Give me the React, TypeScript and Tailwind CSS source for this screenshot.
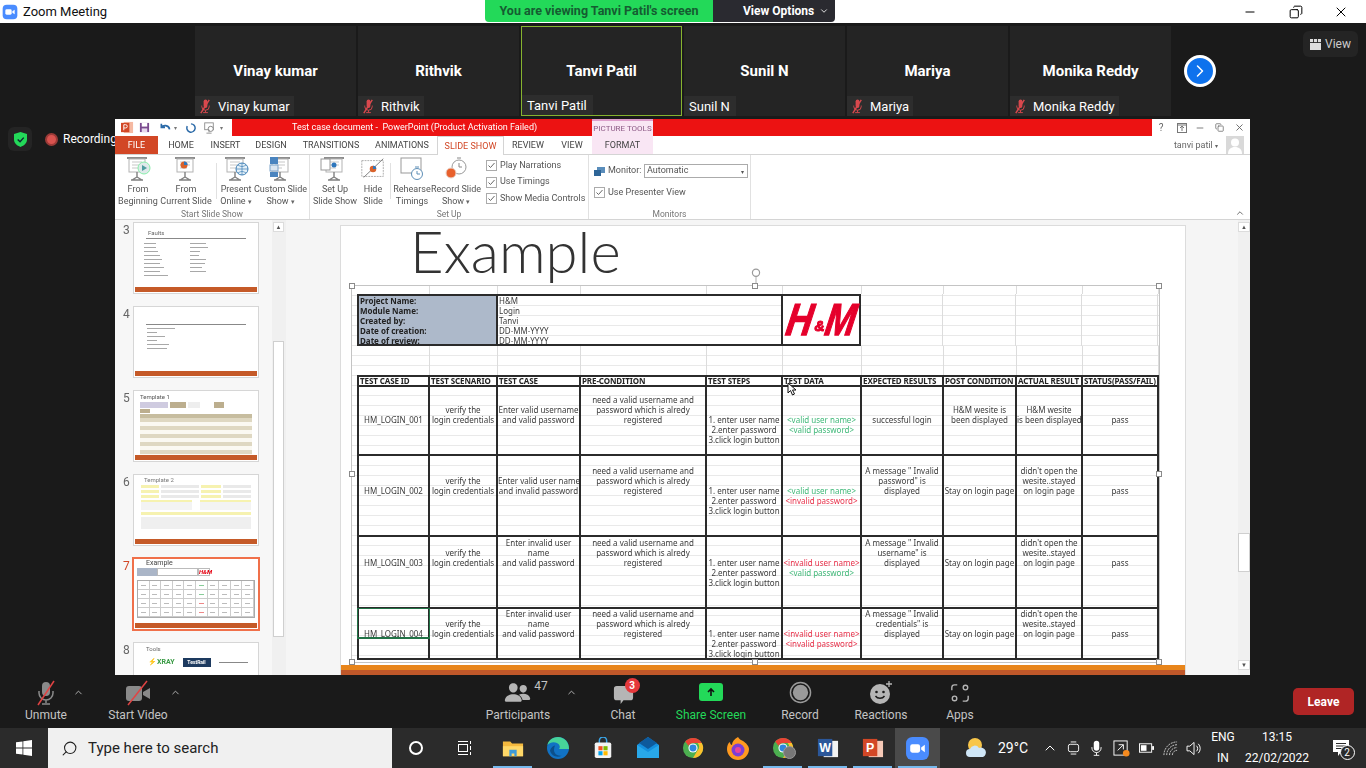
import type { ReactNode } from "react";
import { ChevronDown, ChevronUp, ChevronRight, Search, Minus, X, Copy } from "lucide-react";
import { IoPeople } from "react-icons/io5";

// ---- small shared drawings ----
const MutedMic = () => (
  <svg viewBox="0 0 16 16" className="w-[15px] h-[15px] shrink-0">
    <path d="M6 2.5a2 2 0 0 1 4 0v5a2 2 0 0 1-4 0z" fill="#d9484d" />
    <path d="M4 7v1a4 4 0 0 0 8 0V7M8 12v2M5.5 14.5h5" stroke="#d9484d" fill="none" />
    <path d="M12 1 3 15" stroke="#d9484d" strokeWidth="1.6" />
  </svg>
);

const Tile = ({ name, muted, active }: { name: string; muted?: boolean; active?: boolean }) => (
  <div className={`relative w-[161px] h-[90px] bg-[#242424] flex items-center justify-center ${active ? "border border-[#86b32f]" : ""}`}>
    <span className="text-white text-[15px] font-bold">{name}</span>
    <div className="absolute left-0 bottom-0 h-[20px] bg-[#2d2d2d] flex items-center gap-[5px] pl-[3px] pr-[4px] text-white text-[13px] leading-none">
      {muted && <MutedMic />}
      <span className={muted ? "" : "px-[2px]"}>{name}</span>
    </div>
  </div>
);

const ZoomCam = ({ className }: { className: string }) => (
  <svg viewBox="0 0 24 24" className={className}>
    <rect x="1" y="1" width="22" height="22" rx="6" fill="#4a8cff" />
    <rect x="5" y="8" width="9.5" height="8" rx="2" fill="#fff" />
    <path d="m15.5 11 3.5-2.5v7L15.5 13z" fill="#fff" />
  </svg>
);

// ---- powerpoint ribbon ----
const Board = ({ children }: { children?: ReactNode }) => (
  <svg viewBox="0 0 30 26" className="w-[30px] h-[26px]">
    <rect x="4" y="1" width="20" height="2" fill="#8d8d8d" />
    <rect x="6" y="3" width="16" height="13" fill="#fff" stroke="#b3b3b3" />
    <path d="M9 6h10M9 9h10M9 12h7" stroke="#c7c7c7" />
    <path d="M14 16v5M8 24h12M14 21l-5 3M14 21l5 3" stroke="#808080" strokeWidth="1.4" fill="none" />
    {children}
  </svg>
);

const RibbonBtn = ({ w, lines, icon }: { w: string; lines: ReactNode[]; icon: ReactNode }) => (
  <div className={`${w} flex flex-col items-center shrink-0`}>
    <div className="h-[28px] pt-[1px]">{icon}</div>
    {lines.map((l, i) => (
      <div key={i} className="h-[12px] leading-[12px] whitespace-nowrap">{l}</div>
    ))}
  </div>
);

const Caret = () => <span className="text-[7px] text-[#666] ml-[2px]">▾</span>;

const Check = ({ label, className = "" }: { label: string; className?: string }) => (
  <div className={`flex items-center gap-[3px] h-[11px] whitespace-nowrap ${className}`}>
    <svg viewBox="0 0 11 11" className="w-[11px] h-[11px] shrink-0">
      <rect x=".5" y=".5" width="10" height="10" fill="#fff" stroke="#ababab" />
      <path d="m2.5 5.5 2 2 4-4.5" stroke="#666" fill="none" />
    </svg>
    <span>{label}</span>
  </div>
);

const tabs = [
  ["HOME", "w-[46px]"],
  ["INSERT", "w-[43px]"],
  ["DESIGN", "w-[48px]"],
  ["TRANSITIONS", "w-[72px]"],
  ["ANIMATIONS", "w-[70px]"],
];

const Ribbon = () => (
  <>
    {/* title row */}
    <div className="h-[17px] flex bg-white shrink-0">
      <div className="w-[117px] flex items-center pl-[6px] gap-[5px]">
        <svg viewBox="0 0 14 14" className="w-[13px] h-[13px]">
          <rect x="3" y="1" width="10" height="12" fill="#f5b9a2" />
          <rect x="0" y="2" width="9" height="10" fill="#d24726" />
          <path d="M3 10V4h2a1.5 1.5 0 0 1 0 3.500H3" stroke="#fff" fill="none" />
        </svg>
        <svg viewBox="0 0 12 12" className="w-[11px] h-[11px]">
          <rect x="1" y="1" width="10" height="10" fill="#7a4a8f" />
          <rect x="3" y="1" width="6" height="4" fill="#fff" />
          <rect x="3" y="7" width="6" height="4" fill="#e6d8ec" />
        </svg>
        <svg viewBox="0 0 14 12" className="w-[14px] h-[11px] ml-[3px]">
          <path d="M3 2v4h4M3 6c2-3 8-3 9 2" stroke="#2b6aa8" strokeWidth="1.8" fill="none" />
        </svg>
        <span className="text-[6px] text-[#777] -ml-[3px]">▾</span>
        <svg viewBox="0 0 12 12" className="w-[11px] h-[12px] ml-[3px]">
          <path d="M6.500 1.500A4.500 4.500 0 1 1 2.500 4" stroke="#2b6aa8" strokeWidth="1.6" fill="none" />
        </svg>
        <svg viewBox="0 0 14 14" className="w-[12px] h-[12px] ml-[2px]">
          <rect x="2" y="1" width="10" height="8" fill="#fff" stroke="#888" />
          <circle cx="9" cy="8" r="3" fill="#fff" stroke="#777" />
          <path d="M7 9v3M4 13h6" stroke="#888" />
        </svg>
        <span className="text-[6px] text-[#777]">▾</span>
      </div>
      <div className="w-[360px] bg-[#ec1212] text-white text-[9px] leading-[17px] pl-[60px] whitespace-pre">
        Test case document -  PowerPoint (Product Activation Failed)
      </div>
      <div className="w-[61px] bg-[#f9e6f4] border-t-2 border-[#dd9ecb] text-[#8d5a86] text-[8px] leading-[15px] text-center">PICTURE TOOLS</div>
      <div className="w-[499px] bg-[#ec1212]" />
      <div className="flex-1 flex items-center text-[#666] text-[10px]">
        <span className="w-[18px] text-center">?</span>
        <svg viewBox="0 0 10 10" className="w-[10px] h-[10px] ml-[7px]"><rect x=".5" y=".5" width="9" height="9" fill="none" stroke="#777" /><path d="M5 8V3M3 5l2-2 2 2M1 2h8" stroke="#777" fill="none" /></svg>
        <Minus size={10} className="ml-[8px]" />
        <Copy size={9} className="ml-[10px]" />
        <X size={11} className="ml-[10px]" />
      </div>
    </div>
    {/* tabs */}
    <div className="h-[19px] flex items-stretch bg-white border-b border-[#d4d4d4] text-[#444] text-[9px] shrink-0">
      <div className="w-[43px] bg-[#d24726] text-white flex items-center justify-center pt-[1px]">FILE</div>
      {tabs.map(([t, w]) => (
        <div key={t} className={`${w} flex items-center justify-center pt-[1px]`}>{t}</div>
      ))}
      <div className="w-[67px] h-[19px] border border-b-0 border-[#d4d4d4] bg-white text-[#d24726] flex items-center justify-center pt-[1px]">SLIDE SHOW</div>
      <div className="w-[48px] flex items-center justify-center pt-[1px]">REVIEW</div>
      <div className="w-[40px] flex items-center justify-center pt-[1px]">VIEW</div>
      <div className="w-[61px] bg-[#f9e6f4] flex items-center justify-center pt-[1px]">FORMAT</div>
      <div className="flex-1 flex items-center justify-end pr-[6px] gap-[8px] text-[#666]">
        <span className="pt-[1px]">tanvi patil <span className="text-[6px]">▾</span></span>
        <svg viewBox="0 0 18 18" className="w-[18px] h-[18px]">
          <rect width="18" height="18" fill="#d9d9d9" />
          <circle cx="9" cy="6.500" r="4" fill="#fff" />
          <path d="M2 18c0-5 3-7 7-7s7 2 7 7z" fill="#fff" />
        </svg>
      </div>
    </div>
    {/* ribbon body */}
    <div className="h-[65px] flex bg-white border-b border-[#d4d4d4] text-[#555] text-[9px] shrink-0">
      <div className="w-[195px] border-r border-[#e1e1e1] flex flex-col">
        <div className="flex-1 flex">
          <RibbonBtn w="w-[46px]" lines={["From", "Beginning"]} icon={<Board><circle cx="21" cy="12" r="6" fill="#dfe9ea" stroke="#8ea" /><path d="m19 9 5 3-5 3z" fill="#4f9ca0" /></Board>} />
          <RibbonBtn w="w-[50px]" lines={["From", "Current Slide"]} icon={<Board><circle cx="13" cy="9" r="3.500" fill="#d9622b" /><path d="M13 9V5.500a3.500 3.500 0 0 1 3.500 3.500z" fill="#2f77bd" /></Board>} />
          <div className="w-px h-[36px] mt-[8px] ml-[5px] mr-[2px] bg-[#e1e1e1]" />
          <RibbonBtn w="w-[34px]" lines={["Present", <>Online<Caret /></>]} icon={<Board><circle cx="21" cy="13" r="6" fill="#e4f0f8" stroke="#3f7fb5" /><path d="M15 13h12M21 7v12M17 9c3 2 5 2 8 0M17 17c3-2 5-2 8 0" stroke="#3f7fb5" fill="none" strokeWidth=".7" /></Board>} />
          <div className="w-[2px]" />
          <RibbonBtn w="w-[51px]" lines={["Custom Slide", <>Show<Caret /></>]} icon={<Board><rect x="4" y="1" width="8" height="7" fill="#4a84bf" /><rect x="4" y="9" width="8" height="6" fill="#dbe6f1" stroke="#7da3c9" /><rect x="4" y="16" width="8" height="5" fill="#4a84bf" /></Board>} />
        </div>
        <div className="h-[10px] leading-[10px] text-center text-[#777] text-[8.500px]">Start Slide Show</div>
      </div>
      <div className="w-[279px] border-r border-[#e1e1e1] flex flex-col">
        <div className="flex-1 flex">
          <div className="w-[2px]" />
          <RibbonBtn w="w-[46px]" lines={["Set Up", "Slide Show"]} icon={<Board><rect x="1" y="3" width="9" height="11" fill="#fff" stroke="#999" /><circle cx="14" cy="9" r="2.500" fill="#2f77bd" /></Board>} />
          <RibbonBtn w="w-[30px]" lines={["Hide", "Slide"]} icon={<svg viewBox="0 0 30 26" className="w-[28px] h-[26px]"><rect x="3" y="4" width="23" height="17" fill="#fff" stroke="#aaa" strokeDasharray="2 1" /><path d="M5 22 26 2" stroke="#777" /><circle cx="15" cy="13" r="3.500" fill="#d9622b" /><path d="M15 13v-3.500a3.500 3.500 0 0 1 3.500 3.500z" fill="#2f77bd" /></svg>} />
          <div className="w-px h-[36px] mt-[8px] ml-[2px] mr-[1px] bg-[#e1e1e1]" />
          <RibbonBtn w="w-[40px]" lines={["Rehearse", "Timings"]} icon={<svg viewBox="0 0 30 26" className="w-[30px] h-[26px]"><rect x="4" y="2" width="20" height="15" fill="#fff" stroke="#999" /><circle cx="20" cy="18" r="5.500" fill="#fff" stroke="#5e8fb7" /><path d="M20 15v3h3M18 11h4" stroke="#5e8fb7" fill="none" /></svg>} />
          <RibbonBtn w="w-[48px]" lines={["Record Slide", <>Show<Caret /></>]} icon={<svg viewBox="0 0 30 26" className="w-[30px] h-[26px]"><circle cx="18" cy="11" r="7" fill="#fff" stroke="#999" /><path d="M18 7v4h3M16 2h4" stroke="#888" fill="none" /><circle cx="10" cy="17" r="5" fill="#e8602c" stroke="#e9d5cc" /></svg>} />
          <div className="pl-[6px] pt-[5px] flex flex-col gap-[5.500px]">
            <Check label="Play Narrations" />
            <Check label="Use Timings" />
            <Check label="Show Media Controls" />
          </div>
        </div>
        <div className="h-[10px] leading-[10px] text-center text-[#777] text-[8.500px]">Set Up</div>
      </div>
      <div className="w-[162px] border-r border-[#e1e1e1] flex flex-col pl-[5px]">
        <div className="flex-1">
          <div className="flex items-center gap-[3px] mt-[9px] h-[14px]">
            <svg viewBox="0 0 11 11" className="w-[11px] h-[11px]"><rect x="3" y="1" width="8" height="6" fill="#5a8dbb" /><rect y="4" width="7" height="6" fill="#2e6597" /></svg>
            <span className="w-[32px]">Monitor:</span>
            <div className="ml-[1px] w-[104px] h-[14px] border border-[#ababab] flex items-center justify-between pl-[2px] pr-[3px]">
              <span>Automatic</span>
              <span className="text-[6px]">▾</span>
            </div>
          </div>
          <Check label="Use Presenter View" className="mt-[9px]" />
        </div>
        <div className="h-[10px] leading-[10px] text-center text-[#777] text-[8.500px] pr-[5px]">Monitors</div>
      </div>
      <div className="flex-1 relative">
        <ChevronUp size={10} className="absolute right-[5px] bottom-[1px] text-[#555]" />
      </div>
    </div>
  </>
);

// ---- slide thumbnails ----
const BulletLines = ({ widths }: { widths: string[] }) => (
  <div className="flex flex-col gap-[3px]">
    {widths.map((w, i) => (
      <div key={i} className={`${w} h-px bg-[#a8a8a8]`} />
    ))}
  </div>
);

const Thumb = ({ no, active, children }: { no: number; active?: boolean; children: ReactNode }) => (
  <div className="flex shrink-0 pl-[8px]">
    <div className={`w-[11px] text-[12px] leading-[14px] ${active ? "text-[#d24726]" : "text-[#666]"}`}>{no}</div>
    <div className={`w-[124px] h-[70px] shrink-0 bg-white flex flex-col relative ${active ? "outline-2 outline-[#f0704a]" : "outline outline-[#d6d6d6]"}`}>
      <div className="flex-1 overflow-hidden blur-[0.5px]">{children}</div>
      <div className="h-[5px] mx-[1px] mb-[1px] bg-[#c55a28] shrink-0" />
    </div>
  </div>
);

const TanRows = () => (
  <div className="mx-[6px] flex flex-col">
    {[0, 1, 2, 3, 4, 5, 6, 7, 8, 9].map((i) => (
      <div key={i} className={`h-[4px] ${i % 2 ? "bg-[#fbf9f2]" : "bg-[#dfd8c2]"}`} />
    ))}
  </div>
);

const Thumbs = () => (
  <div className="w-[157px] bg-[#f7f7f7] flex flex-col gap-[14px] pt-[3px] overflow-hidden shrink-0">
    <Thumb no={3}>
      <div className="pl-[14px] pt-[6px] text-[6px] leading-[8px] text-[#666]">Faults</div>
      <div className="h-px mx-[12px] mt-[1px] bg-[#888]" />
      <div className="flex gap-[22px] pl-[10px] pt-[4px]">
        <BulletLines widths={["w-[12px]", "w-[12px]", "w-[14px]", "w-[16px]", "w-[18px]", "w-[16px]", "w-[20px]", "w-[16px]", "w-[24px]"]} />
        <BulletLines widths={["w-[16px]", "w-[18px]", "w-[10px]", "w-[9px]", "w-[16px]", "w-[15px]", "w-[12px]", "w-[16px]"]} />
      </div>
    </Thumb>
    <Thumb no={4}>
      <div className="h-px mx-[12px] mt-[17px] bg-[#888]" />
      <div className="pl-[13px] pt-[3px]">
        <BulletLines widths={["w-[28px]", "w-[10px]", "w-[18px]", "w-[10px]", "w-[22px]", "w-[20px]"]} />
      </div>
    </Thumb>
    <Thumb no={5}>
      <div className="pl-[6px] pt-[2px] text-[6px] leading-[8px] text-[#555]">Template 1</div>
      <div className="flex gap-[2px] mx-[6px] mt-[1px] h-[6px]">
        <div className="w-[28px] bg-[#cfcbe0]" />
        <div className="w-[16px] bg-[#bcae8e]" />
        <div className="w-[12px] bg-[#eee]" />
        <div className="w-[10px]" />
        <div className="w-[10px] bg-[#bcae8e]" />
      </div>
      <div className="h-[4px] w-[10px] bg-[#bcae8e] mx-[6px] mt-[1px]" />
      <div className="h-[4px] mx-[6px] mt-[1px] bg-[#c7bd9f]" />
      <TanRows />
    </Thumb>
    <Thumb no={6}>
      <div className="pl-[10px] pt-[1px] text-[6px] leading-[8px] text-[#777]">Template 2</div>
      <div className="mx-[7px] mt-[1px] flex flex-col gap-[2px]">
        {[0, 1, 2].map((i) => (
          <div key={i} className="flex gap-[2px] h-[3px]">
            <div className="w-[18px] bg-[#f6f2b0]" />
            <div className="flex-1 bg-[#e9e9e9]" />
            <div className="w-[20px] bg-[#f6f2b0]" />
            <div className="w-[28px] bg-[#e9e9e9]" />
          </div>
        ))}
        <div className="flex gap-[8px] h-[10px]">
          <div className="flex-1 bg-[#f3f3f3] border-t-2 border-[#f6f2b0]" />
          <div className="flex-1 bg-[#f3f3f3] border-t-2 border-[#f6f2b0]" />
        </div>
        <div className="h-[3px] bg-[#f6f2b0]" />
        <div className="h-[12px] bg-[#efefef]" />
      </div>
    </Thumb>
    <Thumb no={7} active>
      <div className="pl-[12px] text-[7px] leading-[9px] text-[#444]">Example</div>
      <div className="flex mx-[3px] h-[8px]">
        <div className="w-[20px] bg-[#aab5c7]" />
        <div className="w-[41px] border border-[#bbb]" />
        <div className="w-[12px] border border-[#bbb] text-[6px] leading-[6px] font-bold italic text-[#e50010]">H&amp;M</div>
      </div>
      <div className="mx-[3px] mt-[4px] border border-[#aaa] grid grid-cols-10">
        {Array.from({ length: 40 }, (_, i) => (
          <div key={i} className="h-[9px] border-r border-b border-[#ccc] flex items-center justify-center">
            <div className={`w-[5px] h-px ${i % 10 === 5 ? (i > 20 ? "bg-[#e88]" : "bg-[#8c9]") : "bg-[#bbb]"}`} />
          </div>
        ))}
      </div>
    </Thumb>
    <Thumb no={8}>
      <div className="pl-[12px] pt-[2px] text-[6px] leading-[8px] text-[#666]">Tools</div>
      <div className="flex items-center pl-[14px] pt-[4px] gap-[8px] text-[7px] font-bold text-[#333]">
        <span className="text-[#3a9b45]">⚡XRAY</span>
        <div className="w-[28px] h-[9px] bg-[#1d3a5f] text-white text-[5px] leading-[9px] text-center">TestRail</div>
        <div className="flex-1 h-px bg-[#888] mr-[10px]" />
      </div>
    </Thumb>
  </div>
);

// ---- table on the slide ----
type Cell = [number, string[]];
type Row = { height: string; anchor: number; cells: Cell[] };

const steps: Cell = [0, ["1. enter user name", "2.enter password", "3.click login button"]];
const verify: Cell = [1, ["verify the", "login credentials"]];
const pre: Cell = [2, ["need a valid username and", "password which is alredy", "registered"]];
const stay: Cell = [0, ["Stay on login page"]];
const didnt: Cell = [2, ["didn't open the", "wesite..stayed", "on login page"]];
const pass: Cell = [0, ["pass"]];

const rows: Row[] = [
  {
    height: "h-[69px]",
    anchor: 28,
    cells: [[0, ["HM_LOGIN_001"]], verify, [1, ["Enter valid username", "and valid password"]], pre, steps, [0, ["<valid user name>", "<valid password>"]], [0, ["successful login"]], [1, ["H&M wesite is", "been displayed"]], [1, ["H&M wesite", "is been displayed"]], pass],
  },
  {
    height: "h-[81px]",
    anchor: 30,
    cells: [[0, ["HM_LOGIN_002"]], verify, [1, ["Enter valid user name", "and invalid password"]], pre, steps, [0, ["<valid user name>", "<invalid password>"]], [2, ['A message " Invalid', 'password" is', "displayed"]], stay, didnt, pass],
  },
  {
    height: "h-[72px]",
    anchor: 21,
    cells: [[0, ["HM_LOGIN_003"]], verify, [2, ["Enter invalid user", "name", "and valid password"]], pre, steps, [0, ["<invalid user name>", "<valid password>"]], [2, ['A message " Invalid', 'username" is', "displayed"]], stay, didnt, pass],
  },
  {
    height: "h-[51px]",
    anchor: 20,
    cells: [[0, ["HM_LOGIN_004"]], verify, [2, ["Enter invalid user", "name", "and valid password"]], pre, steps, [0, ["<invalid user name>", "<invalid password>"]], [2, ['A message " Invalid', 'credentials" is', "displayed"]], stay, didnt, pass],
  },
];

const cols = "grid grid-cols-[71px_68px_83px_126px_76px_79px_82px_73px_66px_76px]";
const headers = ["TEST CASE ID", "TEST SCENARIO", "TEST CASE", "PRE-CONDITION", "TEST STEPS", "TEST DATA", "EXPECTED RESULTS", "POST CONDITION", "ACTUAL RESULT", "STATUS(PASS/FAIL)"];

const BlankCols = ({ height }: { height: string }) => (
  <div className={`${cols} ${height} ml-[7px]`}>
    {headers.map((h) => (
      <div key={h} className="border-r border-[#dcdcdc]" />
    ))}
  </div>
);

const Handle = ({ className }: { className: string }) => (
  <div className={`absolute w-[6px] h-[6px] bg-white border border-[#8a8a8a] ${className}`} />
);

const TableImage = () => (
  <div className="relative ml-[11px] w-[807px] h-[376px] outline outline-[#c4c4c4] bg-white bg-[repeating-linear-gradient(to_bottom,transparent_0,transparent_9px,#e9e9e9_9px,#e9e9e9_10px)] text-[8px] leading-[10px] text-[#3a3a3a] font-['Noto_Sans',sans-serif]">
    <BlankCols height="h-[8px]" />
    {/* project info + logo */}
    <div className="flex h-[52px]">
      <div className="ml-[5px] w-[504px] h-[52px] border-2 border-[#2b2b2b] flex bg-white">
        <div className="w-[139px] bg-[#adb9ca] border-r-2 border-[#2b2b2b] pl-[1px] font-bold text-[#222]">
          {["Project Name:", "Module Name:", "Created by:", "Date of creation:", "Date of review:"].map((t) => (
            <div key={t} className="h-[10px]">{t}</div>
          ))}
        </div>
        <div className="w-[285px] border-r-2 border-[#2b2b2b] pl-[1px] bg-[repeating-linear-gradient(to_bottom,transparent_0,transparent_9px,#e9e9e9_9px,#e9e9e9_10px)]">
          {["H&M", "Login", "Tanvi", "DD-MM-YYYY", "DD-MM-YYYY"].map((t, i) => (
            <div key={i} className="h-[10px]">{t}</div>
          ))}
        </div>
        <div className="flex-1 flex items-center justify-center text-[#e5002b] leading-[40px] font-bold italic font-['Liberation_Sans',sans-serif] [-webkit-text-stroke:1px_#e5002b]">
          <span className="text-[36px] -skew-x-12 scale-y-125">H</span>
          <span className="text-[14px] mx-[1px] mt-[12px]">&amp;</span>
          <span className="text-[36px] -skew-x-12 scale-y-125 tracking-[-1px]">M</span>
        </div>
      </div>
      <div className="flex">
        {["w-[82px]", "w-[73px]", "w-[66px]", "w-[76px]"].map((w) => (
          <div key={w} className={`${w} border-r border-[#dcdcdc]`} />
        ))}
      </div>
    </div>
    <BlankCols height="h-[29px]" />
    {/* test cases */}
    <div className="ml-[5px] w-[802px] border-t-2 border-l-2 border-[#2b2b2b]">
      <div className={`${cols} h-[10px]`}>
        {headers.map((h) => (
          <div key={h} className="border-r-2 border-b-2 border-[#2b2b2b] pl-[1px] font-bold text-[#222] whitespace-nowrap leading-[8px] bg-white tracking-[-0.1px]">{h}</div>
        ))}
      </div>
      {rows.map((r) => (
        <div key={r.anchor} className={`${cols} ${r.height}`}>
          {r.cells.map(([above, lines], i) => (
            <div
              key={i}
              className="relative border-r-2 border-b-2 border-[#2b2b2b] text-center whitespace-nowrap overflow-hidden"
              style={{ paddingTop: r.anchor - above * 10 }}
            >
              {lines.map((l) => (
                <div
                  key={l}
                  className={`h-[10px] ${l.startsWith("<invalid") ? "text-[#e8314a]" : l.startsWith("<valid") ? "text-[#3fb878]" : ""}`}
                >
                  {l}
                </div>
              ))}
            </div>
          ))}
        </div>
      ))}
    </div>
    {/* selected excel cell, handles, cursor */}
    <div className="absolute left-[5px] top-[322px] w-[73px] h-[31px] border border-b-2 border-[#217346]" />
    <Handle className="-left-[3px] -top-[3px]" />
    <Handle className="left-[400px] -top-[3px]" />
    <Handle className="-right-[3px] -top-[3px]" />
    <Handle className="-left-[3px] top-[185px]" />
    <Handle className="-right-[3px] top-[185px]" />
    <Handle className="-left-[3px] -bottom-[3px]" />
    <Handle className="left-[400px] -bottom-[3px]" />
    <Handle className="-right-[3px] -bottom-[3px]" />
    <svg viewBox="0 0 14 20" className="absolute left-[397px] -top-[18px] w-[14px] h-[16px]">
      <circle cx="7" cy="6" r="4.500" fill="#fff" stroke="#9a9a9a" strokeWidth="1.500" />
      <path d="M7 11v9" stroke="#9a9a9a" />
    </svg>
    <svg viewBox="0 0 10 14" className="absolute left-[435px] top-[96px] w-[10px] h-[14px]">
      <path d="M1 1v10l2.500-2.500L5.500 13l2-1-2-4H9z" fill="#fff" stroke="#111" />
    </svg>
  </div>
);

const PowerPoint = () => (
  <div className="relative z-10 ml-[115px] w-[1135px] h-[556px] flex flex-col bg-white overflow-hidden blur-[0.3px]">
    <Ribbon />
    <div className="flex-1 flex min-h-0">
      <Thumbs />
      {/* left scrollbar */}
      <div className="w-[14px] shrink-0 bg-[#f0f0f0] pl-[1px] pr-[2px] flex flex-col pt-[2px]">
        <div className="h-[10px] bg-white border border-[#dcdcdc] text-[6px] leading-[8px] text-center text-[#555]">▲</div>
        <div className="mt-[109px] h-[296px] bg-white border border-[#cfcfcf]" />
      </div>
      {/* slide */}
      <div className="flex-1 bg-[#f5f5f5] pl-[55px] pt-[6px] overflow-hidden">
        <div className="w-[844px] h-[449px] bg-white outline outline-[#dcdcdc] flex flex-col">
          <div className="h-[60px] pl-[69px] text-[#333] text-[58px] leading-[50px] font-light font-['Lato',sans-serif]">Example</div>
          <TableImage />
          <div className="mt-[3px] h-[5px] bg-[#e8851b]" />
          <div className="h-[5px] bg-[#c0582a]" />
        </div>
      </div>
      {/* right scrollbar */}
      <div className="w-[12px] shrink-0 bg-[#f0f0f0] flex flex-col pt-[2px]">
        <div className="h-[10px] bg-white border border-[#dcdcdc] text-[6px] leading-[8px] text-center text-[#555]">▲</div>
        <div className="mt-[301px] h-[39px] bg-white border border-[#cfcfcf]" />
        <div className="mt-[88px] h-[10px] bg-white border border-[#dcdcdc] text-[6px] leading-[8px] text-center text-[#555]">▼</div>
      </div>
    </div>
  </div>
);

// ---- zoom toolbar ----
const ToolItem = ({ w, icon, label, green }: { w: string; icon: ReactNode; label: string; green?: boolean }) => (
  <div className={`${w} shrink-0 flex flex-col items-center`}>
    <div className="h-[32px] flex items-end pb-[1px]">{icon}</div>
    <div className={`text-[12px] leading-[16px] whitespace-nowrap ${green ? "text-[#23d959]" : "text-[#c4c4c4]"}`}>{label}</div>
  </div>
);

const Toolbar = () => (
  <div className="h-[53px] bg-[#1a1a1a] flex shrink-0 relative z-20">
    <div className="w-[20px]" />
    <ToolItem
      w="w-[52px]"
      label="Unmute"
      icon={
        <svg viewBox="0 0 24 26" className="w-[24px] h-[26px]">
          <rect x="8" y="2" width="8" height="14" rx="4" fill="#8a8a8a" />
          <path d="M5 11v2a7 7 0 0 0 14 0v-2M12 20v3M8 24h8" stroke="#8a8a8a" fill="none" strokeWidth="1.5" />
          <path d="M20 1 4 25" stroke="#e04343" strokeWidth="1.500" />
        </svg>
      }
    />
    <ChevronUp size={11} className="mt-[12px] text-[#bbb] ml-[1px]" />
    <div className="w-[24px]" />
    <ToolItem
      w="w-[60px]"
      label="Start Video"
      icon={
        <svg viewBox="0 0 26 26" className="w-[26px] h-[26px]">
          <rect x="1" y="6" width="16" height="15" rx="3" fill="#8a8a8a" />
          <path d="m18 12 7-4v11l-7-4z" fill="#8a8a8a" />
          <path d="M22 1 3 25" stroke="#e04343" strokeWidth="1.500" />
        </svg>
      }
    />
    <ChevronUp size={11} className="mt-[12px] text-[#bbb] ml-[2px]" />
    <div className="w-[306px]" />
    <ToolItem
      w="w-[62px]"
      label="Participants"
      icon={
        <div className="flex items-start pl-[16px]">
          <IoPeople size={27} className="text-[#b5b5b5] -scale-x-100" />
          <span className="text-[#c4c4c4] text-[12px] leading-none ml-[3px] mt-[1px]">47</span>
        </div>
      }
    />
    <div className="w-[17px]" />
    <ChevronUp size={11} className="mt-[12px] text-[#bbb]" />
    <div className="w-[22px]" />
    <ToolItem
      w="w-[48px]"
      label="Chat"
      icon={
        <div className="relative">
          <svg viewBox="0 0 24 24" className="w-[23px] h-[23px]">
            <path d="M5 3h14a3 3 0 0 1 3 3v9a3 3 0 0 1-3 3h-7l-3 4v-4H5a3 3 0 0 1-3-3V6a3 3 0 0 1 3-3z" fill="#b5b5b5" />
          </svg>
          <span className="absolute -top-[5px] left-[13px] w-[15px] h-[15px] rounded-full bg-[#e5383b] text-white text-[10px] leading-[15px] text-center font-bold">3</span>
        </div>
      }
    />
    <div className="w-[24px]" />
    <ToolItem
      w="w-[80px]"
      label="Share Screen"
      green
      icon={
        <div className="w-[24px] h-[18px] mb-[5px] rounded-[3px] bg-[#23d959] flex items-center justify-center">
          <svg viewBox="0 0 10 10" className="w-[10px] h-[10px]"><path d="M5 9V2M2 5l3-3 3 3" stroke="#111" strokeWidth="1.600" fill="none" /></svg>
        </div>
      }
    />
    <div className="w-[24px]" />
    <ToolItem
      w="w-[50px]"
      label="Record"
      icon={
        <svg viewBox="0 0 24 24" className="w-[23px] h-[23px] mb-[2px]">
          <circle cx="12" cy="12" r="10.500" fill="none" stroke="#9a9a9a" strokeWidth="1.500" />
          <circle cx="12" cy="12" r="8" fill="#9a9a9a" />
        </svg>
      }
    />
    <div className="w-[28px]" />
    <ToolItem
      w="w-[56px]"
      label="Reactions"
      icon={
        <svg viewBox="0 0 24 26" className="w-[24px] h-[26px]">
          <circle cx="11" cy="14" r="10" fill="#b5b5b5" />
          <circle cx="7.500" cy="12" r="1.300" fill="#1a1a1a" />
          <circle cx="14.500" cy="12" r="1.300" fill="#1a1a1a" />
          <path d="M6.500 16c2 3 7 3 9 0" stroke="#1a1a1a" strokeWidth="1.400" fill="none" />
          <path d="M20 1v6M17 4h6" stroke="#b5b5b5" strokeWidth="1.300" />
        </svg>
      }
    />
    <div className="w-[31px]" />
    <ToolItem
      w="w-[40px]"
      label="Apps"
      icon={
        <svg viewBox="0 0 22 22" className="w-[20px] h-[20px] mb-[3px]" fill="none" stroke="#b5b5b5" strokeWidth="1.500">
          <path d="M8 2H5a3 3 0 0 0-3 3v3M14 20h3a3 3 0 0 0 3-3v-3" />
          <circle cx="17" cy="5" r="2.500" />
          <circle cx="5" cy="17" r="2.500" />
        </svg>
      }
    />
    <div className="flex-1" />
    <div className="mt-[13px] mr-[12px] w-[61px] h-[27px] rounded-[5px] bg-[#b02525] text-white text-[12px] font-bold flex items-center justify-center">Leave</div>
  </div>
);

// ---- windows taskbar ----
const TaskApp = ({ children, running, active, w = "w-[45px]" }: { children: ReactNode; running?: boolean; active?: boolean; w?: string }) => (
  <div className={`${w} h-[40px] shrink-0 relative flex items-center justify-center ${active ? "bg-[#4a4a4a]" : ""}`}>
    {children}
    {running && <div className="absolute bottom-0 left-[3px] right-[3px] h-[2px] bg-[#76b9ed]" />}
  </div>
);

const Chrome = () => (
  <svg viewBox="0 0 24 24" className="w-[22px] h-[22px]">
    <circle cx="12" cy="12" r="11" fill="#4caf50" />
    <path d="M12 1a11 11 0 0 1 9.530 5.500H12a5.500 5.500 0 0 0-5 3L3.500 5A11 11 0 0 1 12 1z" fill="#ea4335" />
    <path d="M21.530 6.500A11 11 0 0 1 12 23l5-8.500a5.500 5.500 0 0 0 0-8z" fill="#fbc02d" />
    <circle cx="12" cy="12" r="5" fill="#fff" />
    <circle cx="12" cy="12" r="3.800" fill="#2e86de" />
  </svg>
);

const Taskbar = () => (
  <div className="h-[40px] bg-[#2b2b2b] flex items-stretch text-white shrink-0 relative z-20">
    <div className="w-[48px] flex items-center justify-center">
      <svg viewBox="0 0 16 16" className="w-[16px] h-[16px]" fill="#fff">
        <path d="M0 2.300 6.500 1.400v6.200H0zM7.300 1.300 16 0v7.600H7.300zM0 8.400h6.500v6.200L0 13.700zM7.300 8.400H16V16l-8.700-1.300z" />
      </svg>
    </div>
    <div className="w-[344px] bg-[#f0f0f0] flex items-center pl-[13px] gap-[10px] text-[#222] text-[15px]">
      <Search size={17} className="-scale-x-100 text-[#222]" strokeWidth={1.5} />
      <span>Type here to search</span>
    </div>
    <TaskApp w="w-[48px]"><div className="w-[14px] h-[14px] rounded-full border-2 border-white" /></TaskApp>
    <TaskApp w="w-[50px]">
      <svg viewBox="0 0 16 16" className="w-[16px] h-[16px]" fill="none" stroke="#fff">
        <path d="M1 1.500h10M1 14.500h10" />
        <rect x="1.500" y="4.500" width="9" height="7" />
        <path d="M13.500 1v3M13.500 6v4M13.500 12v3" />
      </svg>
    </TaskApp>
    <TaskApp running>
      <svg viewBox="0 0 24 24" className="w-[22px] h-[22px]">
        <path d="M1 5h8l2 2h12v14H1z" fill="#f4b93e" />
        <path d="M1 10h22v11H1z" fill="#ffd868" />
        <path d="M8 21v-7h8v7h-2.500v-3h-3v3z" fill="#3d9ad8" />
      </svg>
    </TaskApp>
    <TaskApp>
      <svg viewBox="0 0 24 24" className="w-[24px] h-[24px]">
        <circle cx="12" cy="12" r="11" fill="#1172c4" />
        <path d="M23 12.500C23 6 18 1 12 1 6 1 2 5 1.500 9 4 6 8 5.500 11 7c3 1.500 3.500 4.500 2 6h10z" fill="#47d39a" />
        <path d="M8 14c0 4 4 6.500 8 5.500-5 3-11 0-12-5 1-3 3-4.500 5-5-.7 1.500-1 3-1 4.500z" fill="#0c4f8a" />
      </svg>
    </TaskApp>
    <TaskApp>
      <svg viewBox="0 0 24 24" className="w-[22px] h-[22px]">
        <path d="M8 7V4a4 4 0 0 1 8 0v3" stroke="#3aa6e8" strokeWidth="1.600" fill="none" />
        <rect x="3" y="6" width="18" height="17" rx="2" fill="#f3f3f3" />
        <rect x="7" y="10" width="4.500" height="4.500" fill="#f25022" />
        <rect x="12.500" y="10" width="4.500" height="4.500" fill="#7fba00" />
        <rect x="7" y="15.500" width="4.500" height="4.500" fill="#00a4ef" />
        <rect x="12.500" y="15.500" width="4.500" height="4.500" fill="#ffb900" />
      </svg>
    </TaskApp>
    <TaskApp>
      <svg viewBox="0 0 24 24" className="w-[24px] h-[24px]">
        <path d="M1 9 12 1l11 8v13H1z" fill="#1490df" />
        <path d="M1 9l11 7 11-7v13H1z" fill="#28a8ea" />
        <path d="M3 7l9-6 9 6-9 6z" fill="#0e5a9c" />
      </svg>
    </TaskApp>
    <TaskApp><Chrome /></TaskApp>
    <TaskApp>
      <svg viewBox="0 0 24 24" className="w-[24px] h-[24px]">
        <path d="M12 1c1 2 3 3 5 4 3 2 6 5 6 8a11 11 0 0 1-22 0c0-3 1-6 3-7 0 2 1 3 2 3 0-3 2-6 6-8z" fill="#ff9a1f" />
        <circle cx="12" cy="14" r="6.500" fill="#7b3fd4" />
        <circle cx="12" cy="14" r="3" fill="#e8439a" />
      </svg>
    </TaskApp>
    <TaskApp running>
      <div className="relative">
        <Chrome />
        <div className="absolute -right-[2px] bottom-0 w-[13px] h-[13px] rounded-full bg-[#777] border border-[#999]" />
      </div>
    </TaskApp>
    <TaskApp running>
      <svg viewBox="0 0 24 24" className="w-[23px] h-[23px]">
        <rect x="8" y="4" width="15" height="17" fill="#f3f3f3" />
        <rect x="2" y="2" width="15" height="18" fill="#2b579a" />
        <text x="9.500" y="16" textAnchor="middle" fontSize="13" fontWeight="700" fill="#fff" fontFamily="Liberation Sans">W</text>
      </svg>
    </TaskApp>
    <TaskApp running>
      <svg viewBox="0 0 24 24" className="w-[23px] h-[23px]">
        <rect x="8" y="4" width="15" height="17" fill="#f6c9b7" />
        <rect x="2" y="2" width="15" height="18" fill="#d24726" />
        <text x="9.500" y="16" textAnchor="middle" fontSize="13" fontWeight="700" fill="#fff" fontFamily="Liberation Sans">P</text>
      </svg>
    </TaskApp>
    <TaskApp active running w="w-[45px]"><ZoomCam className="w-[25px] h-[25px]" /></TaskApp>
    <div className="w-[19px]" />
    <div className="w-[34px] flex items-center justify-center">
      <svg viewBox="0 0 24 24" className="w-[24px] h-[24px]">
        <circle cx="11" cy="9" r="7" fill="#f8c64a" />
        <path d="M6 21a4 4 0 0 1 0-8 5 5 0 0 1 9-1 4 4 0 0 1 4 9z" fill="#cfe6f7" />
      </svg>
    </div>
    <div className="w-[40px] flex items-center justify-center text-[14px]">29°C</div>
    <div className="flex items-center text-white">
      <div className="w-[28px] flex justify-center pl-[6px]"><ChevronUp size={16} strokeWidth={1.5} /></div>
      <div className="w-[24px] flex justify-center">
        <svg viewBox="0 0 14 16" className="w-[13px] h-[16px]" fill="none" stroke="#fff"><rect x="1.500" y="4" width="11" height="8" rx="2" /><path d="M4 1.500h6M4 14.500h6" /></svg>
      </div>
      <div className="w-[23px] flex justify-center">
        <svg viewBox="0 0 12 18" className="w-[11px] h-[18px]" fill="#fff"><rect x="3" y="1" width="6" height="11" rx="3" /><path d="M1 8v1a5 5 0 0 0 10 0V8M6 14v3M3 17h6" stroke="#fff" fill="none" /></svg>
      </div>
      <div className="w-[27px] flex justify-center">
        <svg viewBox="0 0 18 18" className="w-[17px] h-[17px]"><rect x="1" y="1" width="14" height="15" fill="none" stroke="#fff" /><path d="M5 11 11 5M6 5h5v5" stroke="#fff" fill="none" /><circle cx="14" cy="14" r="3.500" fill="#f58a1f" /></svg>
      </div>
      <div className="w-[23px] flex justify-center">
        <svg viewBox="0 0 16 10" className="w-[15px] h-[10px]"><rect x=".5" y=".5" width="13" height="9" fill="none" stroke="#fff" /><rect x="2" y="2" width="6" height="6" fill="#fff" /><rect x="14" y="3" width="2" height="4" fill="#fff" /></svg>
      </div>
      <div className="w-[25px] flex justify-center">
        <svg viewBox="0 0 16 16" className="w-[15px] h-[15px]" fill="none" stroke="#ddd"><path d="M1 15A14 14 0 0 1 15 1M4 15A11 11 0 0 1 15 4M7 15a8 8 0 0 1 8-8M10 15a5 5 0 0 1 5-5" strokeDasharray="2 1" /></svg>
      </div>
      <div className="w-[22px] flex justify-center">
        <svg viewBox="0 0 18 16" className="w-[17px] h-[15px]" fill="none" stroke="#fff"><path d="M1 5.500h3L8.500 1.500v13L4 10.500H1zM11 5a4 4 0 0 1 0 6M13 3a7 7 0 0 1 0 10" /></svg>
      </div>
    </div>
    <div className="w-[36px] flex flex-col items-center justify-center text-[12px] leading-[21px]">
      <span>ENG</span>
      <span>IN</span>
    </div>
    <div className="ml-[2px] w-[68px] flex flex-col items-center justify-center text-[12px] leading-[21px]">
      <span>13:15</span>
      <span>22/02/2022</span>
    </div>
    <div className="flex-1 flex items-center justify-center pl-[4px]">
      <div className="relative">
        <svg viewBox="0 0 18 18" className="w-[18px] h-[18px]" fill="#fff"><path d="M1 1h16v12H9l-3 4v-4H1z" /><path d="M4 4.500h10M4 7h10M4 9.500h7" stroke="#2b2b2b" /></svg>
        <span className="absolute -right-[5px] top-[6px] w-[15px] h-[15px] rounded-full bg-[#2b2b2b] border border-white text-[10px] leading-[13px] text-center">2</span>
      </div>
    </div>
  </div>
);

const App = () => (
  <div className="w-[1366px] h-[768px] overflow-hidden flex flex-col bg-[#1a1a1a] font-['Roboto',sans-serif]">
    {/* zoom title bar */}
    <div className="h-[23px] bg-white flex items-center shrink-0 relative z-20">
      <ZoomCam className="ml-[2px] w-[16px] h-[16px]" />
      <span className="ml-[5px] text-[13px] text-[#111]">Zoom Meeting</span>
      <div className="flex-1" />
      <Minus size={14} strokeWidth={1} absoluteStrokeWidth className="text-black mr-[32px]" />
      <Copy size={14} strokeWidth={1} absoluteStrokeWidth className="text-black -scale-x-100 mr-[30px]" />
      <X size={16} strokeWidth={1} absoluteStrokeWidth className="text-black mr-[17px]" />
      <div className="absolute left-[485px] top-0 h-[22px] flex text-[12px] font-bold">
        <div className="w-[228px] bg-[#23d959] text-[#155c31] rounded-bl-[4px] flex items-center justify-center text-[12.500px]">You are viewing Tanvi Patil's screen</div>
        <div className="w-[122px] bg-[#2a2a30] text-white rounded-br-[4px] flex items-center pl-[30px] gap-[5px]">
          View Options <ChevronDown size={10} />
        </div>
      </div>
    </div>
    {/* meeting */}
    <div className="flex-1 relative min-h-0">
      <div className="h-[96px] pt-[3px] pl-[195px] flex gap-[2px]">
        <Tile name="Vinay kumar" muted />
        <Tile name="Rithvik" muted />
        <Tile name="Tanvi Patil" active />
        <Tile name="Sunil N" />
        <Tile name="Mariya" muted />
        <Tile name="Monika Reddy" muted />
        <div className="ml-[11px] mt-[29px] w-[32px] h-[32px] rounded-full bg-[#0e72ed] border-[3px] border-white flex items-center justify-center text-white">
          <ChevronRight size={20} strokeWidth={1.800} />
        </div>
      </div>
      <div className="absolute left-[1303px] top-[8px] w-[55px] h-[26px] rounded-[6px] bg-[#242424] text-[#ccc] text-[12px] flex items-center justify-center gap-[4px]">
        <svg viewBox="0 0 10 10" className="w-[11px] h-[11px]" fill="#ddd"><rect x="0" y="0" width="2.800" height="2.800" /><rect x="3.600" y="0" width="2.800" height="2.800" /><rect x="7.200" y="0" width="2.800" height="2.800" /><rect x="0" y="3.600" width="10" height="6.400" /></svg>
        View
      </div>
      <div className="absolute left-[8px] top-[104px] flex items-center text-white text-[12px]">
        <div className="w-[24px] h-[24px] rounded-[6px] bg-[#242424] flex items-center justify-center">
          <svg viewBox="0 0 14 16" className="w-[13px] h-[15px]"><path d="M7 0 14 2v6c0 4-3 6.500-7 8-4-1.500-7-4-7-8V2z" fill="#23d959" /><path d="m4 8 2.500 2.500L10.500 6" stroke="#123" strokeWidth="1.500" fill="none" /></svg>
        </div>
        <div className="ml-[13px] w-[13px] h-[13px] rounded-full bg-[#d9534f] border-2 border-[#9b3a37]" />
        <span className="ml-[5px]">Recording</span>
      </div>
      <PowerPoint />
    </div>
    <Toolbar />
    <Taskbar />
  </div>
);

export default App;
